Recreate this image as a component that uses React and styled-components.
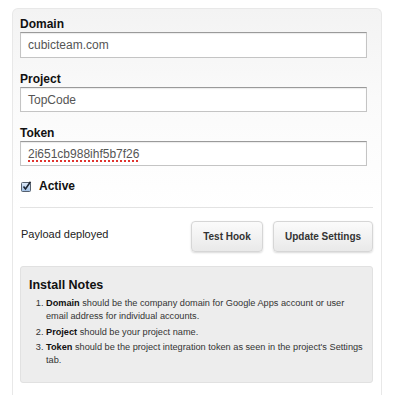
import styled, { createGlobalStyle } from "styled-components";

const GlobalStyle = createGlobalStyle`
  body {
    margin: 0;
    background: #fff;
    font-family: "Liberation Sans", Arial, sans-serif;
    color: #222;
  }
`;

const Page = styled.div`
  padding: 8px 18px 0 12px;
  width: 400px;
  box-sizing: border-box;
`;

const Panel = styled.form`
  border: 1px solid #e8e8e8;
  border-bottom: none;
  border-radius: 6px 6px 0 0;
  background: linear-gradient(#f3f3f3, #fafafa 90px, #fff 200px);
  padding: 7px 8px 13px 7px;
`;

const Label = styled.label`
  display: block;
  font-size: 12px;
  font-weight: bold;
  line-height: 16px;
  color: #111;
  margin-top: ${(p) => (p.first ? "0" : "13px")};
`;

const Field = styled.div`
  display: flex;
  align-items: center;
  box-sizing: border-box;
  width: calc(100% - 6px);
  height: ${(p) => (p.tall ? "26px" : "25px")};
  padding: 0 7px;
  border: 1px solid #c4c4c4;
  border-top-color: #9a9a9a;
  background: #fff;
  box-shadow: inset 0 1px 1px rgba(0, 0, 0, 0.08);
  font-size: 12px;
  color: #555;
`;

const Value = styled.span`
  text-decoration: ${(p) => (p.misspelled ? "underline dotted #e0342f" : "none")};
  text-decoration-thickness: 2px;
  text-underline-offset: 3px;
`;

const CheckRow = styled.div`
  display: flex;
  align-items: center;
  gap: 7px;
  margin-top: 12px;
  height: 16px;
  padding-left: 1px;
  font-size: 12px;
  font-weight: bold;
  color: #111;
`;

const Divider = styled.hr`
  border: none;
  border-top: 1px solid #e3e3e3;
  margin: 13px 0 13px;
`;

const ActionRow = styled.div`
  display: flex;
  align-items: center;
  gap: 10px;
`;

const Status = styled.span`
  flex: 1;
  font-size: 11px;
  color: #222;
  padding-left: 1px;
  margin-top: -5px;
`;

const Button = styled.button`
  box-sizing: border-box;
  height: 31px;
  width: ${(p) => p.w}px;
  border: 1px solid #d6d6d6;
  border-radius: 4px;
  background: linear-gradient(#fbfbfb, #e9e9e9);
  box-shadow: 0 1px 2px rgba(0, 0, 0, 0.15);
  font-family: "Liberation Sans", Arial, sans-serif;
  font-size: 10px;
  font-weight: bold;
  color: #333;
  padding: 0;
`;

const Notes = styled.div`
  margin-top: 14px;
  background: #ededed;
  border: 1px solid #e1e1e1;
  border-radius: 3px;
  padding: 10px 8px 12px 8px;
`;

const NotesTitle = styled.h4`
  margin: 0 0 4px;
  font-size: 12.5px;
  font-weight: bold;
  color: #111;
  line-height: 16px;
`;

const NotesList = styled.ol`
  margin: 0;
  padding-left: 17px;
  font-size: 9.2px;
  line-height: 13px;
  color: #333;

  & > li {
    margin-bottom: 2.5px;
  }
  & b {
    color: #111;
  }
`;

const CheckBox = () => (
  <svg width="11" height="11" viewBox="0 0 11 11">
    <defs>
      <linearGradient id="cb" x1="0" y1="0" x2="0" y2="1">
        <stop offset="0" stopColor="#dfeaf7" />
        <stop offset="1" stopColor="#9fbfe3" />
      </linearGradient>
    </defs>
    <rect x="0.5" y="1.5" width="9" height="9" rx="1" fill="url(#cb)" stroke="#55606e" />
    <path d="M2.5 5.5 L4.5 8 L9.5 0.8" fill="none" stroke="#1c2430" strokeWidth="1.6" />
  </svg>
);

const notes = [
  {
    key: "Domain",
    text: "should be the company domain for Google Apps account or user email address for individual accounts.",
  },
  { key: "Project", text: "should be your project name." },
  {
    key: "Token",
    text: "should be the project integration token as seen in the project's Settings tab.",
  },
];

const App = () => {
  return (
    <Page>
      <GlobalStyle />
      <Panel onSubmit={(e) => e.preventDefault()}>
        <Label first>Domain</Label>
        <Field tall>
          <Value>cubicteam.com</Value>
        </Field>
        <Label>Project</Label>
        <Field>
          <Value>TopCode</Value>
        </Field>
        <Label>Token</Label>
        <Field>
          <Value misspelled>2i651cb988ihf5b7f26</Value>
        </Field>
        <CheckRow>
          <CheckBox />
          Active
        </CheckRow>
        <Divider />
        <ActionRow>
          <Status>Payload deployed</Status>
          <Button type="button" w={72}>Test Hook</Button>
          <Button type="button" w={100}>Update Settings</Button>
        </ActionRow>
        <Notes>
          <NotesTitle>Install Notes</NotesTitle>
          <NotesList>
            {notes.map((n) => (
              <li key={n.key}>
                <b>{n.key}</b> {n.text}
              </li>
            ))}
          </NotesList>
        </Notes>
      </Panel>
    </Page>
  );
};

export default App;
